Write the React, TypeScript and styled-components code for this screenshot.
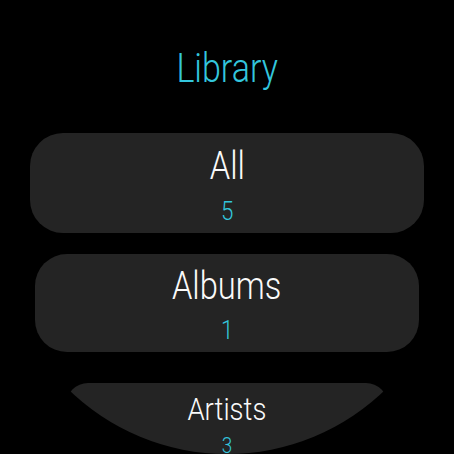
import React from "react";
import styled, { createGlobalStyle } from "styled-components";

const Global = createGlobalStyle`
  html, body {
    margin: 0;
    padding: 0;
    background: #000;
  }
  body {
    font-family: Roboto, "Noto Sans", sans-serif;
  }
`;

const Screen = styled.div`
  width: 454px;
  height: 454px;
  border-radius: 50%;
  overflow: hidden;
  background: #000;
  display: flex;
  flex-direction: column;
  align-items: center;
  padding-top: 44px;
  box-sizing: border-box;
`;

const Narrow = styled.span<{ $squeeze?: number }>`
  display: inline-block;
  white-space: nowrap;
  transform: scaleX(${(p) => p.$squeeze ?? 0.86});
`;

const Title = styled.h1`
  margin: 0 0 41px;
  font-size: 41px;
  line-height: 48px;
  font-weight: 300;
  color: #33c6dd;
  text-align: center;
`;

const Card = styled.div<{ $w: number; $h: number; $r: number; $pt: number; $mb: number }>`
  flex: none;
  width: ${(p) => p.$w}px;
  height: ${(p) => p.$h}px;
  border-radius: ${(p) => p.$r}px;
  padding-top: ${(p) => p.$pt}px;
  margin-bottom: ${(p) => p.$mb}px;
  box-sizing: border-box;
  background: #242424;
  display: flex;
  flex-direction: column;
  align-items: center;
`;

const Label = styled.div<{ $size: number; $lh: number; $gap: number }>`
  font-size: ${(p) => p.$size}px;
  line-height: ${(p) => p.$lh}px;
  margin-bottom: ${(p) => p.$gap}px;
  font-weight: 300;
  color: #fafafa;
`;

const Count = styled.div<{ $size: number; $lh: number }>`
  font-size: ${(p) => p.$size}px;
  line-height: ${(p) => p.$lh}px;
  font-weight: 300;
  color: #33c6dd;
`;

type Item = {
  label: string;
  count: number;
  w: number;
  h: number;
  r: number;
  pt: number;
  mb: number;
  size: number;
  lh: number;
  gap: number;
  csize: number;
  clh: number;
};

const items: Item[] = [
  { label: "All", count: 5, w: 394, h: 100, r: 33, pt: 11, mb: 21, size: 38, lh: 44, gap: 8, csize: 26, clh: 30 },
  { label: "Albums", count: 1, w: 384, h: 98, r: 32, pt: 10, mb: 31, size: 38, lh: 44, gap: 7, csize: 26, clh: 30 },
  { label: "Artists", count: 3, w: 322, h: 82, r: 22, pt: 8, mb: 0, size: 32, lh: 36, gap: 6, csize: 22, clh: 26 },
];

export default function App() {
  return (
    <>
      <Global />
      <Screen>
        <Title>
          <Narrow $squeeze={0.83}>Library</Narrow>
        </Title>
        {items.map((it) => (
          <Card key={it.label} $w={it.w} $h={it.h} $r={it.r} $pt={it.pt} $mb={it.mb}>
            <Label $size={it.size} $lh={it.lh} $gap={it.gap}>
              <Narrow>{it.label}</Narrow>
            </Label>
            <Count $size={it.csize} $lh={it.clh}>
              <Narrow>{it.count}</Narrow>
            </Count>
          </Card>
        ))}
      </Screen>
    </>
  );
}
